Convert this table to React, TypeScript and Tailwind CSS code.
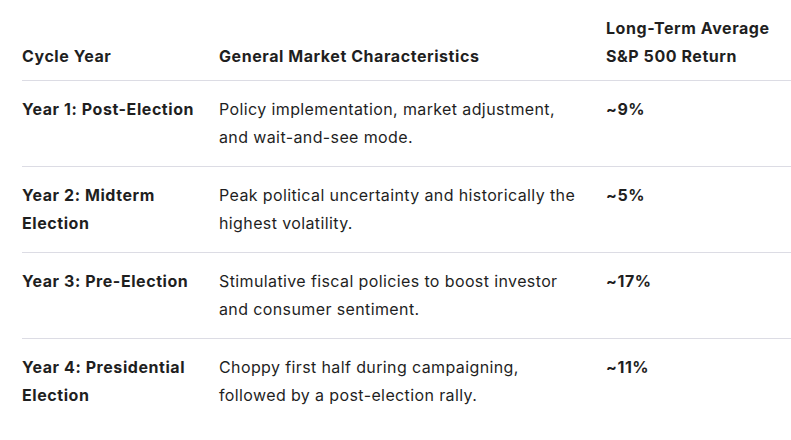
const rows = [
  {
    year: ["Year 1: Post-Election"],
    desc: ["Policy implementation, market adjustment,", "and wait-and-see mode."],
    ret: "~9%",
  },
  {
    year: ["Year 2: Midterm", "Election"],
    desc: ["Peak political uncertainty and historically the", "highest volatility."],
    ret: "~5%",
  },
  {
    year: ["Year 3: Pre-Election"],
    desc: ["Stimulative fiscal policies to boost investor", "and consumer sentiment."],
    ret: "~17%",
  },
  {
    year: ["Year 4: Presidential", "Election"],
    desc: ["Choppy first half during campaigning,", "followed by a post-election rally."],
    ret: "~11%",
  },
];

const Lines = ({ lines }: { lines: string[] }) => (
  <>
    {lines.map((l, i) => (
      <span key={i} className="block whitespace-nowrap">
        {l}
      </span>
    ))}
  </>
);

export default function App() {
  return (
    <div
      className="w-[791px] h-[440px] overflow-hidden bg-white pl-[22px] pt-[14px] text-[#1f1f1f]"
      style={{ fontFamily: "Inter, 'Noto Sans', sans-serif" }}
    >
      <table className="w-[769px] table-fixed border-collapse text-[16px] leading-[28px] tracking-[0.024em]">
        <colgroup>
          <col className="w-[197px]" />
          <col className="w-[387px]" />
          <col />
        </colgroup>
        <thead>
          <tr className="border-b border-[#dcdce4]">
            <th className="pb-[10px] pr-4 text-left align-bottom font-bold tracking-[0.035em]">Cycle Year</th>
            <th className="pb-[10px] pr-4 text-left align-bottom font-bold tracking-[0.035em]">
              General Market Characteristics
            </th>
            <th className="pb-[10px] pr-4 text-left align-bottom font-bold tracking-[0.035em]">
              <Lines lines={["Long-Term Average", "S&P 500 Return"]} />
            </th>
          </tr>
        </thead>
        <tbody>
          {rows.map((r, i) => (
            <tr key={i} className={i < rows.length - 1 ? "border-b border-[#dcdce4]" : ""}>
              <td className="pt-[14px] pb-[15px] pr-4 align-top font-bold tracking-[0.035em]">
                <Lines lines={r.year} />
              </td>
              <td className="pt-[14px] pb-[15px] pr-4 align-top">
                <Lines lines={r.desc} />
              </td>
              <td className="pt-[14px] pb-[15px] pr-4 align-top font-bold tracking-[0.035em]">{r.ret}</td>
            </tr>
          ))}
        </tbody>
      </table>
    </div>
  );
}
